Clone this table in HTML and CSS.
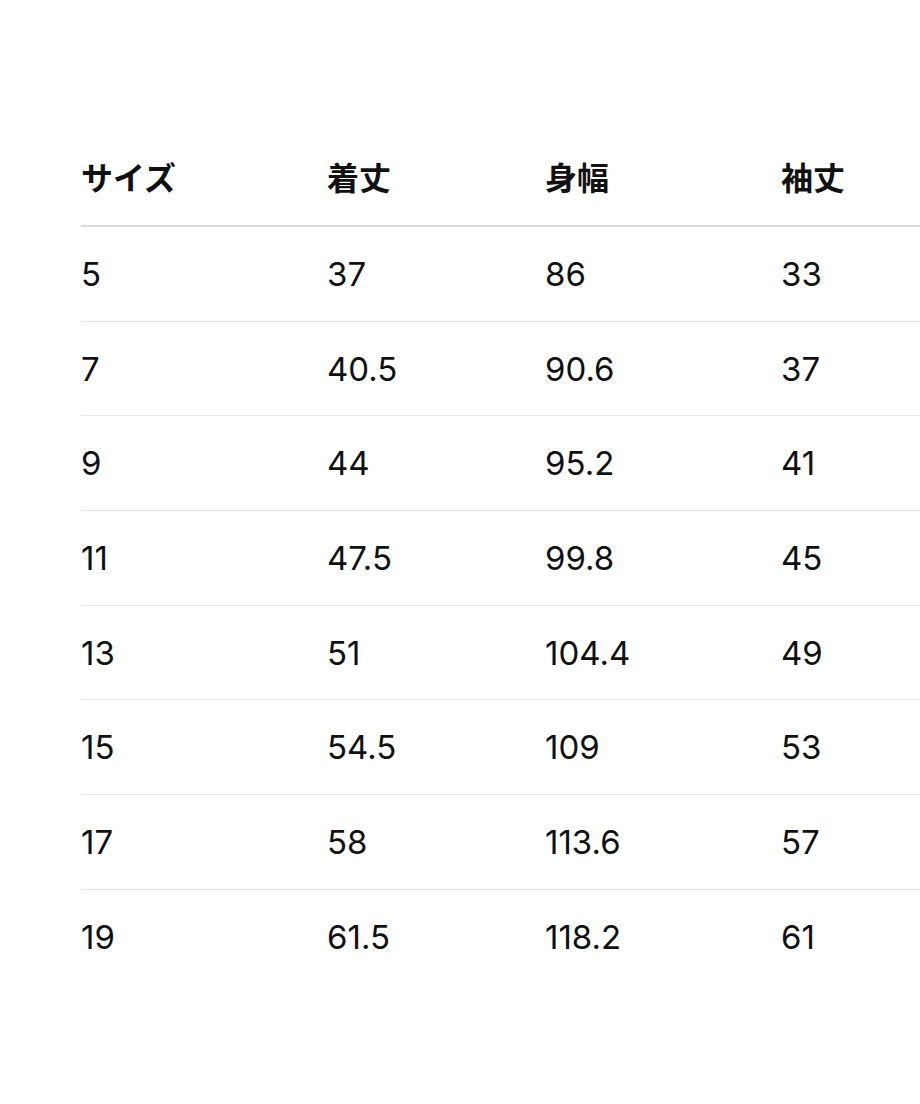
FILE: index.html
```html
<!DOCTYPE html>
<html lang="ja">
<head>
<meta charset="utf-8">
<link rel="stylesheet" href="styles.css">
</head>
<body>
<div class="page">
  <table class="size-table">
    <colgroup>
      <col class="c1"><col class="c2"><col class="c3"><col class="c4">
    </colgroup>
    <thead>
      <tr><th>サイズ</th><th>着丈</th><th>身幅</th><th>袖丈</th></tr>
    </thead>
    <tbody>
      <tr><td>5</td><td>37</td><td>86</td><td>33</td></tr>
      <tr><td>7</td><td>40.5</td><td>90.6</td><td>37</td></tr>
      <tr><td>9</td><td>44</td><td>95.2</td><td>41</td></tr>
      <tr><td>11</td><td>47.5</td><td>99.8</td><td>45</td></tr>
      <tr><td>13</td><td>51</td><td>104.4</td><td>49</td></tr>
      <tr><td>15</td><td>54.5</td><td>109</td><td>53</td></tr>
      <tr><td>17</td><td>58</td><td>113.6</td><td>57</td></tr>
      <tr><td>19</td><td>61.5</td><td>118.2</td><td>61</td></tr>
    </tbody>
  </table>
</div>
</body>
</html>
```

FILE: styles.css
```css
html, body {
  margin: 0;
  padding: 0;
  background: #ffffff;
  overflow: hidden;
}
.page {
  width: 920px;
  height: 1104px;
  overflow: hidden;
  padding: 132px 0 0 81px;
  box-sizing: border-box;
}
.size-table {
  border-collapse: collapse;
  width: 900px;
  table-layout: fixed;
  color: #111111;
}
.c1 { width: 246px; }
.c2 { width: 218px; }
.c3 { width: 236px; }
.c4 { width: 200px; }
.size-table th,
.size-table td {
  text-align: left;
  padding: 0;
  vertical-align: middle;
}
.size-table th {
  height: 87px;
  padding-bottom: 6px;
  font-family: "Noto Sans CJK JP", "Noto Sans", sans-serif;
  font-weight: 700;
  font-size: 32px;
  border-bottom: 2px solid #dcdcdc;
}
.size-table td {
  height: 93.7px;
  font-family: Inter, "Noto Sans", sans-serif;
  font-weight: 400;
  font-size: 33px;
  border-bottom: 1.7px solid #e6e6e6;
}
.size-table tbody tr:last-child td {
  border-bottom: none;
}
```
